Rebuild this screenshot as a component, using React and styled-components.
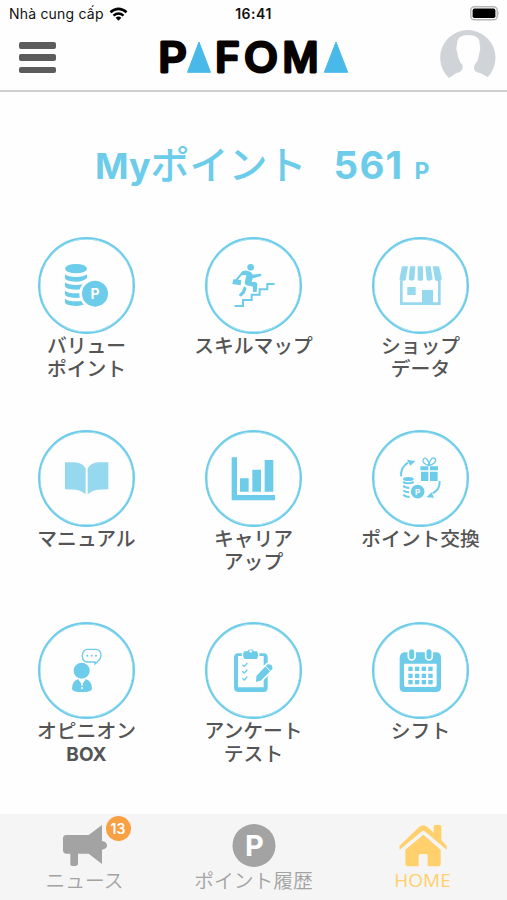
import React from "react";
import styled, { createGlobalStyle } from "styled-components";

const BLUE = "#6dcce9";
const PALE = "#96d9ee";
const GREY = "#a3a3a3";
const YELLOW = "#ffd06b";

const GlobalStyle = createGlobalStyle`
  * { box-sizing: border-box; }
  body { margin: 0; background: #fff; }
`;

const Screen = styled.div`
  width: 507px;
  height: 900px;
  display: flex;
  flex-direction: column;
  overflow: hidden;
  background: #fefefe;
  font-family: Inter, "Noto Sans CJK JP", sans-serif;
`;

const StatusBar = styled.div`
  height: 28px;
  flex: none;
  display: grid;
  grid-template-columns: 1fr auto 1fr;
  align-items: center;
  padding: 0 7px;
  color: #111;
`;

const Carrier = styled.div`
  display: flex;
  align-items: center;
  gap: 5px;
  padding-left: 2px;
  font-size: 14px;
  line-height: 28px;
  letter-spacing: 0.2px;
`;

const Clock = styled.div`
  font-size: 14px;
  font-weight: 600;
  letter-spacing: 0.5px;
  padding-bottom: 2px;
`;

const Battery = styled.svg`
  justify-self: end;
  margin-top: -1px;
`;

const Header = styled.header`
  height: 64px;
  flex: none;
  display: grid;
  grid-template-columns: 1fr auto 1fr;
  align-items: start;
  padding: 2px 11px 0;
  border-bottom: 2px solid #cfcfcf;
`;

const MenuButton = styled.button`
  width: 37px;
  height: 31px;
  margin: 12px 0 0 8px;
  padding: 0;
  border: 0;
  background: none;
  display: flex;
  flex-direction: column;
  justify-content: space-between;
`;

const MenuBar = styled.span`
  width: 37px;
  height: 6.5px;
  border-radius: 2px;
  background: #5c5c5c;
`;

const Logo = styled.svg`
  display: block;
`;

const Avatar = styled.svg`
  justify-self: end;
`;

const Points = styled.div`
  height: 145px;
  flex: none;
  padding: 0 60px 0 95px;
  display: flex;
  align-items: baseline;
  color: ${BLUE};
  line-height: 145px;
`;

const PointsPart = styled.span`
  font-size: ${(p) => p.$size}px;
  font-weight: ${(p) => p.$weight || 700};
  letter-spacing: ${(p) => p.$spacing || 0}px;
  margin-left: ${(p) => p.$gap || 0}px;
  white-space: nowrap;
`;

const MenuGrid = styled.main`
  flex: 1;
  min-height: 0;
  padding: 0 3px;
  display: grid;
  grid-template-columns: repeat(3, 167px);
  grid-auto-rows: 192.5px;
`;

const MenuItem = styled.div`
  display: flex;
  flex-direction: column;
  align-items: center;
`;

const Ring = styled.div`
  width: 97px;
  height: 97px;
  flex: none;
  border: 2px solid ${BLUE};
  box-shadow: inset 0 0 0 0.4px ${BLUE};
  border-radius: 50%;
  display: flex;
  align-items: center;
  justify-content: center;

  svg { flex: none; }
`;

const ItemLabel = styled.div`
  display: flex;
  flex-direction: column;
  align-items: center;
  padding-top: 1px;
  color: #555;
  font-size: 19.8px;
  line-height: 23.3px;
`;

const LabelLine = styled.span`
  font-weight: ${(p) => (p.$latin ? 700 : 500)};
  font-size: ${(p) => (p.$latin ? 19 : 19.8)}px;
  white-space: nowrap;
`;

const TabBar = styled.nav`
  height: 86px;
  flex: none;
  display: grid;
  grid-template-columns: repeat(3, 1fr);
  background: #f5f5f5;
`;

const Tab = styled.div`
  display: flex;
  flex-direction: column;
  align-items: center;
  padding-top: 10px;
  color: ${(p) => (p.$active ? YELLOW : GREY)};
`;

const TabIcon = styled.div`
  position: relative;
  height: 44px;
`;

const TabLabel = styled.div`
  font-size: ${(p) => (p.$latin ? 19 : 19.8)}px;
  font-weight: ${(p) => (p.$latin ? 400 : 350)};
  font-family: ${(p) => (p.$latin ? '"Open Sans"' : '"Noto Sans CJK JP"')}, sans-serif;
  line-height: 24px;
`;

const Badge = styled.span`
  position: absolute;
  left: 43px;
  top: -8px;
  width: 25px;
  height: 25px;
  border-radius: 50%;
  background: #f9a043;
  color: #fff;
  font-size: 14px;
  font-weight: 600;
  line-height: 25px;
  text-align: center;
`;

const Glyph = ({ x, y, children }) => (
  <svg width="97" height="97" viewBox={`${x} ${y} 291 291`} fill={BLUE}>
    {children}
  </svg>
);

const LetterP = ({ x, y, size, fill = "#fff" }) => (
  <text x={x} y={y} fontSize={size} fontWeight="700" textAnchor="middle" fill={fill}>P</text>
);

const CoinsIcon = () => (
  <Glyph x={54} y={21}>
    <ellipse cx="168" cy="116" rx="33" ry="14" />
    {[136, 160, 185, 209].map((y) => (
      <path key={y} d={`M135 ${y - 3}Q145 ${y + 5} 168 ${y + 5}Q190 ${y + 5} 201 ${y - 3}V${y + 8}Q190 ${y + 19} 168 ${y + 19}Q135 ${y + 18} 135 ${y + 8}Z`} />
    ))}
    <circle cx="225" cy="191" r="43" stroke="#fff" strokeWidth="8" />
    <LetterP x={225} y={206} size={42} />
  </Glyph>
);

const StairsIcon = () => (
  <Glyph x={76} y={21}>
    <circle cx="213" cy="112" r="10" />
    <path d="M188 124Q200 118 213 126L220 134L243 131Q248 135 242 139L219 145L216 156H226Q234 157 233 165L231 186H220V170L199 165Q193 160 196 153L200 135L186 136L175 149L185 151L183 166L158 162L161 148L168 148Z" />
    <path d="M193 169L201 174L195 190L184 200L177 195L187 184Z" />
    <path d="M165 228H190V210H216V194H240V178H263V162H285" fill="none" stroke={BLUE} strokeWidth="6" />
  </Glyph>
);

const ShopIcon = () => (
  <Glyph x={82} y={21}>
    <g fill={PALE}>
      <path d="M172 109H190L183 150Q178 154 165 150Q164 145 166 138Z" />
      <path d="M196 109H212L209 149Q200 156 192 148Z" />
      <path d="M219 109H235V149Q227 156 219 149Z" />
      <path d="M242 109H258L264 148Q254 156 246 149Z" />
      <path d="M264 109H283L291 143Q292 151 285 152Q276 155 271 149Z" />
      <path d="M166 151H174V217H280V151H288V225H166Z" />
      <path d="M188 171H213V195H188ZM232 180H265V219H232Z" />
    </g>
  </Glyph>
);

const BookIcon = () => (
  <Glyph x={54} y={28}>
    <path fill={PALE} d="M135 125H164Q187 126 197 143V221Q184 209 166 207L135 206ZM265 125H236Q213 126 203 143V221Q216 209 234 207L265 206Z" />
  </Glyph>
);

const ChartIcon = () => (
  <Glyph x={556} y={28}>
    <path d="M636 110H652V223H766V239H636ZM661 173H687V213H661ZM698 147H724V213H698ZM735 118H761V213H735Z" />
  </Glyph>
);

const ExchangeIcon = () => (
  <Glyph x={82} y={28}>
    <path d="M169 167Q168 139 190 126M285 181Q286 207 264 218" fill="none" stroke={BLUE} strokeWidth="6" />
    <path d="M187 117L212 121L197 135ZM268 231L245 230L261 215Z" />
    <path d="M227 137H251V149H227ZM256 137H280V149H256ZM229 153H251V181H229ZM256 153H279V181H256Z" />
    <path d="M253 135Q233 128 235 119Q238 108 246 115Q254 122 253 135Q253 122 261 114Q270 108 273 118Q274 128 253 135" fill="none" stroke={BLUE} strokeWidth="4" />
    <ellipse cx="191" cy="175" rx="16" ry="6" />
    <path d="M175 184Q190 192 207 184M176 195Q181 202 194 202M176 209Q182 215 194 215M176 222Q182 229 195 229" fill="none" stroke={BLUE} strokeWidth="6" />
    <circle cx="219" cy="213" r="23" stroke="#fff" strokeWidth="5" />
    <LetterP x={219} y={222} size={24} />
  </Glyph>
);

const OpinionIcon = () => (
  <Glyph x={54} y={21}>
    <circle cx="185" cy="167" r="24" />
    <path d="M176 192L186 206L196 192Q216 197 216 221Q216 231 186 231Q156 231 156 221Q156 197 176 192Z" />
    <path d="M177 192L186 204L195 192" fill="none" stroke="#fff" strokeWidth="5" />
    <circle cx="186" cy="209" r="3" fill="#fff" />
    <circle cx="186" cy="219" r="3" fill="#fff" />
    <path d="M201 103H229Q243 105 243 122Q242 133 234 139L225 147V141H201Q187 139 187 122Q188 105 201 103Z" fill="#fff" stroke={BLUE} strokeWidth="4" />
    <circle cx="202" cy="122" r="3" />
    <circle cx="215" cy="122" r="3" />
    <circle cx="228" cy="122" r="3" />
  </Glyph>
);

const SurveyIcon = () => (
  <Glyph x={76} y={21}>
    <path fillRule="evenodd" d="M174 115H254Q264 116 264 127V220Q263 231 253 231H175Q163 230 163 219V127Q164 116 174 115ZM175 123V217H252V123Z" />
    <path stroke="#fff" strokeWidth="4" d="M192 107H202Q205 101 213 101Q221 101 224 107H233Q242 120 233 134H193Q184 120 192 107Z" />
    <circle cx="213" cy="109" r="4" fill="#fff" />
    <path d="M188 149L194 154L203 144M188 169L194 174L203 164M188 190L194 195L203 185" fill="none" stroke={BLUE} strokeWidth="4" />
    <path stroke="#fff" strokeWidth="5" d="M261 147Q268 142 277 149Q285 157 280 164L245 199L226 204L228 181Z" />
    <path d="M257 153L273 169" stroke="#fff" strokeWidth="3" />
  </Glyph>
);

const CalendarIcon = () => (
  <Glyph x={577} y={21}>
    <path fillRule="evenodd" d="M674 112H772Q784 114 784 128V219Q782 231 770 231H673Q661 230 660 219V128Q662 113 674 112ZM673 146V209Q673 216 681 216H765Q771 216 771 209V146Z" />
    {[696, 748].map((x) => (
      <rect key={x} x={x - 10} y="100" width="20" height="35" rx="10" stroke="#fff" strokeWidth="5" />
    ))}
    {[155, 176, 195].map((y) =>
      [686, 706, 726, 746].map((x) => <rect key={`${x}-${y}`} x={x} y={y} width="13" height="13" />)
    )}
  </Glyph>
);

const ITEMS = [
  { lines: ["バリュー", "ポイント"], Icon: CoinsIcon },
  { lines: ["スキルマップ"], Icon: StairsIcon },
  { lines: ["ショップ", "データ"], Icon: ShopIcon },
  { lines: ["マニュアル"], Icon: BookIcon },
  { lines: ["キャリア", "アップ"], Icon: ChartIcon },
  { lines: ["ポイント交換"], Icon: ExchangeIcon },
  { lines: ["オピニオン", "BOX"], Icon: OpinionIcon },
  { lines: ["アンケート", "テスト"], Icon: SurveyIcon },
  { lines: ["シフト"], Icon: CalendarIcon },
];

const WifiIcon = () => (
  <svg width="19" height="15" viewBox="0 0 20 15" fill="none" stroke="#000" strokeWidth="2.7">
    <path d="M1.5 5.2Q10 -2 18.5 5.2M4.7 8.7Q10 4.2 15.3 8.7" />
    <path d="M7 11Q10 8.4 13 11L10 14Z" fill="#000" stroke="none" />
  </svg>
);

const PafomaLogo = () => (
  <Logo width="200" height="60" viewBox="153 30 200 60">
    <g fill="#080303" stroke="#080303" strokeWidth="2.8" strokeLinejoin="round" fontSize="41" fontWeight="500">
      <text x="157.2" y="72.4" textLength="28.6" lengthAdjust="spacingAndGlyphs">P</text>
      <text x="214" y="72.4" textLength="25" lengthAdjust="spacingAndGlyphs">F</text>
      <text x="243" y="72.4" textLength="34" lengthAdjust="spacingAndGlyphs">O</text>
      <text x="281.5" y="72.4" textLength="36" lengthAdjust="spacingAndGlyphs">M</text>
    </g>
    <path d="M198 42L209.5 72.3H186.5ZM335 42L346.7 72.3H323.3Z" fill="#49b9e9" stroke="#49b9e9" strokeLinejoin="round" />
  </Logo>
);

export default function App() {
  return (
    <Screen>
      <GlobalStyle />
      <StatusBar>
        <Carrier>Nhà cung cấp <WifiIcon /></Carrier>
        <Clock>16:41</Clock>
        <Battery width="30" height="15" viewBox="0 0 30 15">
          <rect x="0.8" y="0.8" width="26.4" height="13" rx="3.5" fill="#fff" stroke="#b5b5b5" strokeWidth="1.4" />
          <rect x="2.6" y="2.6" width="22.8" height="9.4" rx="1.8" fill="#000" />
          <path d="M28.3 5Q30 7.3 28.3 9.6Z" fill="#aaa" />
        </Battery>
      </StatusBar>
      <Header>
        <MenuButton aria-label="Menu"><MenuBar /><MenuBar /><MenuBar /></MenuButton>
        <PafomaLogo />
        <Avatar width="56" height="48" viewBox="559 89 168 144">
          <path fill="#d0d3d8" d="M586 233A83 83 0 1 1 702 230L681 219Q659 214 661 200Q663 190 672 182Q675 171 677 158Q682 144 678 133Q680 104 644 104Q608 104 610 133Q606 145 611 158Q613 174 619 184Q628 193 627 203Q625 215 607 219Z" />
        </Avatar>
      </Header>
      <Points>
        <PointsPart $size={36}>My</PointsPart>
        <PointsPart $size={39} $weight={500}>ポイント</PointsPart>
        <PointsPart $size={38.5} $gap={27} $spacing={1.2}>561</PointsPart>
        <PointsPart $size={23} $gap={11}>P</PointsPart>
      </Points>
      <MenuGrid>
        {ITEMS.map(({ lines, Icon }) => (
          <MenuItem key={lines[0]}>
            <Ring><Icon /></Ring>
            <ItemLabel>
              {lines.map((line) => (
                <LabelLine key={line} $latin={line === "BOX"}>{line}</LabelLine>
              ))}
            </ItemLabel>
          </MenuItem>
        ))}
      </MenuGrid>
      <TabBar>
        <Tab>
          <TabIcon>
            <svg width="44" height="43" viewBox="191 59 132 129" fill={GREY}>
              <path d="M199 92H268L308 62V110Q323 112 323 123Q323 134 308 136V179L268 148H236V180Q235 184 230 185H217Q213 184 213 180V148H199Q192 147 191 140V100Q192 93 199 92Z" />
            </svg>
            <Badge>13</Badge>
          </TabIcon>
          <TabLabel>ニュース</TabLabel>
        </Tab>
        <Tab>
          <TabIcon>
            <svg width="44" height="44" viewBox="0 0 44 44">
              <circle cx="22" cy="21.5" r="21.5" fill={GREY} />
              <LetterP x={22.5} y={31.5} size={29} />
            </svg>
          </TabIcon>
          <TabLabel>ポイント履歴</TabLabel>
        </Tab>
        <Tab $active>
          <TabIcon>
            <svg width="48" height="44" viewBox="437 57 144 132" fill={YELLOW}>
              <path d="M438 123L498 65Q510 56 521 65L541 83V64Q542 60 546 60H560Q564 60 564 64V105L580 122V134L516 80Q510 75 504 80L439 134Z" />
              <path d="M510 89L562 134V178Q561 184 555 184H523V151Q522 147 518 147H501Q496 147 496 152V184H462Q456 183 456 178V134Z" />
            </svg>
          </TabIcon>
          <TabLabel $latin>HOME</TabLabel>
        </Tab>
      </TabBar>
    </Screen>
  );
}
